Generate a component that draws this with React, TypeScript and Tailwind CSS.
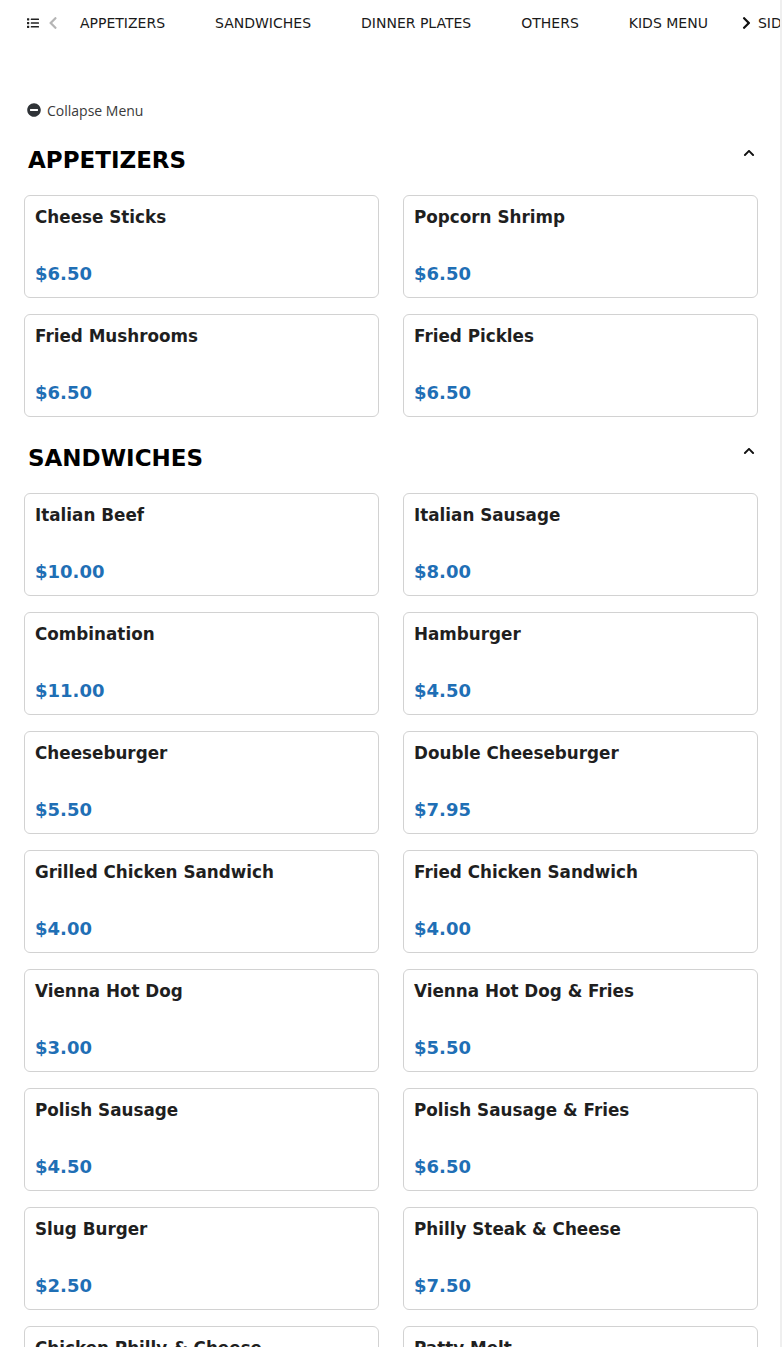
import React from 'react';
import { FaList, FaChevronLeft, FaChevronRight, FaChevronUp, FaMinusCircle } from 'react-icons/fa';

type Item = { name: string; price: string };

const categories = ['APPETIZERS', 'SANDWICHES', 'DINNER PLATES', 'OTHERS', 'KIDS MENU', 'SIDES', 'DRINKS'];

const sections: { title: string; items: Item[] }[] = [
  {
    title: 'APPETIZERS',
    items: [
      { name: 'Cheese Sticks', price: '$6.50' },
      { name: 'Popcorn Shrimp', price: '$6.50' },
      { name: 'Fried Mushrooms', price: '$6.50' },
      { name: 'Fried Pickles', price: '$6.50' },
    ],
  },
  {
    title: 'SANDWICHES',
    items: [
      { name: 'Italian Beef', price: '$10.00' },
      { name: 'Italian Sausage', price: '$8.00' },
      { name: 'Combination', price: '$11.00' },
      { name: 'Hamburger', price: '$4.50' },
      { name: 'Cheeseburger', price: '$5.50' },
      { name: 'Double Cheeseburger', price: '$7.95' },
      { name: 'Grilled Chicken Sandwich', price: '$4.00' },
      { name: 'Fried Chicken Sandwich', price: '$4.00' },
      { name: 'Vienna Hot Dog', price: '$3.00' },
      { name: 'Vienna Hot Dog & Fries', price: '$5.50' },
      { name: 'Polish Sausage', price: '$4.50' },
      { name: 'Polish Sausage & Fries', price: '$6.50' },
      { name: 'Slug Burger', price: '$2.50' },
      { name: 'Philly Steak & Cheese', price: '$7.50' },
      { name: 'Chicken Philly & Cheese', price: '$7.50' },
      { name: 'Patty Melt', price: '$5.50' },
    ],
  },
];

function MenuCard({ item }: { item: Item }) {
  return (
    <div className="h-[103px] flex flex-col justify-between bg-white border border-[#d2d2d2] rounded-md px-[10px] pt-[9px] pb-[11px]">
      <div className="text-[16.8px] leading-[24px] font-bold text-[#1f1f1f]">{item.name}</div>
      <div className="text-[18px] leading-[24px] font-bold text-[#1f6fb5]">{item.price}</div>
    </div>
  );
}

export default function App() {
  return (
    <div className="flex bg-white min-h-[1347px] overflow-hidden" style={{ fontFamily: '"DejaVu Sans", Verdana, sans-serif' }}>
      <div className="flex-1 min-w-0">
        {/* Category nav */}
        <nav className="relative h-[46px] flex items-center pl-[27px] overflow-hidden">
          <FaList className="w-[12px] h-[12px] text-[#222] shrink-0" />
          <FaChevronLeft className="w-[10px] h-[14px] text-[#b5b5b5] ml-[9px] shrink-0" />
          <div className="flex gap-[50px] ml-[22px] whitespace-nowrap">
            {categories.map((c) => (
              <span key={c} className="text-[14px] text-[#1a1a1a]">{c}</span>
            ))}
          </div>
          <span className="absolute left-[736px] top-0 h-[46px] w-[20px] flex items-center justify-center bg-white">
            <FaChevronRight className="w-[9px] h-[14px] text-[#111]" />
          </span>
        </nav>

        <div className="pl-6 pr-[22px]">
          <button className="mt-[54px] h-5 flex items-center gap-[6px] pl-[3px] text-[14px] text-[#3a3a3a]" style={{ fontFamily: '"Open Sans", Lato, sans-serif' }}>
            <FaMinusCircle className="w-[14px] h-[14px] text-[#2f3337]" />
            Collapse Menu
          </button>

          {sections.map((s, i) => (
            <section key={s.title} className={i === 0 ? 'mt-[23px]' : 'mt-6'}>
              <div className="h-8 mb-5 flex items-center justify-between pl-1 pr-[3px]">
                <h2 className="text-[23px] leading-8 font-bold text-black pt-[2px]">{s.title}</h2>
                <FaChevronUp className="w-[12px] h-[12px] text-[#111] -mt-[12px]" />
              </div>
              <div className="grid grid-cols-2 gap-x-6 gap-y-4">
                {s.items.map((it) => (
                  <MenuCard key={it.name} item={it} />
                ))}
              </div>
            </section>
          ))}
        </div>
      </div>
      <div className="w-[2px] shrink-0 bg-[#efefef]" />
    </div>
  );
}
